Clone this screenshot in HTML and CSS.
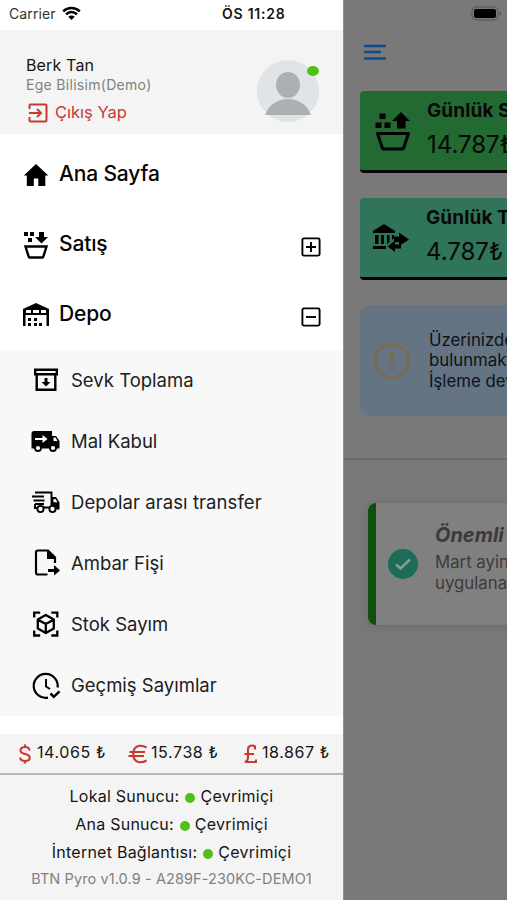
FILE: index.html
```html
<!DOCTYPE html>
<html lang="tr">
<head>
<meta charset="utf-8">
<title>BTN Pyro</title>
<link rel="stylesheet" href="styles.css">
</head>
<body>
<div class="app">
  <aside class="drawer">
    <div class="status">
      <span class="carrier">Carrier</span>
      <svg class="wifi" width="19" height="15" viewBox="0 0 19 15"><path d="M1.200 5.300a12 12 0 0 1 16.600 0M4 8.300a8 8 0 0 1 11 0" fill="none" stroke="#000" stroke-width="2.500"/><path d="M9.500 14 6.300 10.700a4.600 4.600 0 0 1 6.400 0z"/></svg>
      <span class="clock">ÖS 11:28</span>
    </div>
    <header class="profile">
      <div class="who">
        <div class="name">Berk Tan</div>
        <div class="company">Ege Bilisim(Demo)</div>
        <div class="logout">
          <svg width="20" height="20" viewBox="0 0 20 20" fill="none" stroke="#c63a30" stroke-width="2"><path d="M1.500 6V2.500a1 1 0 0 1 1-1h15a1 1 0 0 1 1 1v15a1 1 0 0 1-1 1h-15a1 1 0 0 1-1-1V14M1 10h11.500M9 6l4 4-4 4"/></svg>
          <span>Çıkış Yap</span>
        </div>
      </div>
      <div class="avatar">
        <svg width="62" height="62" viewBox="0 0 62 62"><circle cx="31" cy="31" r="31" fill="#e0e4e6"/><ellipse cx="31" cy="25" rx="12" ry="13" fill="#abb1b3"/><path d="M8 55c4-11 13-16 23-16s19 5 23 16z" fill="#abb1b3"/></svg>
        <i class="presence"></i>
      </div>
    </header>
    <nav class="menu">
      <div class="item home">
        <svg width="26" height="24" viewBox="0 0 26 24"><path d="M13 1 .8 12.500h3V23h7v-7.500h4.500V23h7V12.500h3z"/></svg>
        <span>Ana Sayfa</span>
      </div>
      <div class="item sales">
        <svg width="26" height="28" viewBox="0 0 26 28"><path d="M1 1h4v4H1zM7 1h4v4H7zM5 7h4v4H5zM16 1h5v5h4l-6.500 6.500L12 6h4z"/><path d="M2.500 15.500h21l-3.200 10.200a1 1 0 0 1-1 .8H6.700a1 1 0 0 1-1-.8z" fill="none" stroke="#000" stroke-width="2.400"/></svg>
        <span>Satış</span>
        <svg class="toggle" width="20" height="20" viewBox="0 0 20 20" fill="none" stroke="#000" stroke-width="1.900"><rect x="1.400" y="1.400" width="17.200" height="17.200" rx="1.500"/><path d="M5 10h10M10 5v10"/></svg>
      </div>
      <div class="item depot">
        <svg width="26" height="25" viewBox="0 0 26 25"><path fill-rule="evenodd" d="M0 24V7l13-6 13 6v17h-2.500V13h-21v11zM3 8v3h5V8zm7 0v3h6V8zm8 0v3h5V8z"/><path d="M5 16h3v3H5zM11 16h3v3h-3zM5 21h3v3H5zM11 21h3v3h-3zM16 21h3v3h-3z"/></svg>
        <span>Depo</span>
        <svg class="toggle" width="20" height="20" viewBox="0 0 20 20" fill="none" stroke="#000" stroke-width="1.900"><rect x="1.400" y="1.400" width="17.200" height="17.200" rx="1.500"/><path d="M5 10h10"/></svg>
      </div>
    </nav>
    <ul class="submenu">
      <li><svg width="30" height="28" viewBox="0 0 30 28"><g fill="none" stroke="#000" stroke-width="2.400"><path d="M4.200 3.700h21.600v4.600H4.200zM5.700 8.500v15.300h18.600V8.500"/></g><path d="M13.500 12h3v4h3L15 20.500 10.500 16h3z"/></svg><span>Sevk Toplama</span></li>
      <li><svg width="30" height="28" viewBox="0 0 30 28"><path d="M.5 6.500a2.500 2.500 0 0 1 2.500-2.500h18v5h4l3.500 5v7.500H.5z"/><path d="M4 12h8" stroke="#fff" stroke-width="2"/><path d="m11.500 8 5 4-5 4z" fill="#fff"/><path d="M22.500 10.500h2l2 3.500h-4z" fill="#fff"/><g fill="#fff" stroke="#000" stroke-width="1.800"><circle cx="7" cy="21" r="3"/><circle cx="22" cy="21" r="3"/></g></svg><span>Mal Kabul</span></li>
      <li><svg width="30" height="28" viewBox="0 0 30 28"><path d="M4 4.500h16.500v15H12M1 8.500h12M2.500 12.500h11M4 16h9M4 16v4h3" fill="none" stroke="#000" stroke-width="1.900"/><path d="M20 9h5l3.500 5.500v7h-3a4 4 0 0 0-5.500-3z"/><path d="M22.500 11h2l2 3.300h-4z" fill="#fff"/><g fill="#fff" stroke="#000" stroke-width="1.900"><circle cx="9.500" cy="21" r="3.100"/><circle cx="21.500" cy="21" r="3.100"/></g></svg><span class="transfer">Depolar arası transfer</span></li>
      <li><svg width="30" height="28" viewBox="0 0 30 28"><path d="M16.500 25.500H7a2 2 0 0 1-2-2V3.500a2 2 0 0 1 2-2h10l7 7V14" fill="none" stroke="#000" stroke-width="2.200"/><path d="M16 1l9 9h-9zM17 20h6v-4l6 5.500-6 5V23h-6z"/></svg><span>Ambar Fişi</span></li>
      <li><svg width="30" height="28" viewBox="0 0 30 28" fill="none" stroke="#000" stroke-width="2.300"><path d="M3.200 7.500V2.600h6M20.300 2.600h6v4.900M3.200 20.500v5h6M20.300 25.500h6v-5"/><path d="M14.800 5 22.800 9.500v9L14.800 23l-8-4.500v-9zM7 9.800l7.800 4.200 7.800-4.200M14.800 14v9" stroke-linejoin="round"/></svg><span>Stok Sayım</span></li>
      <li><svg width="30" height="28" viewBox="0 0 30 28" fill="none" stroke="#000" stroke-width="2.200"><path d="M17 25.700A12 12 0 1 1 26.600 15.500"/><path d="M15 7v7.500l4 2.500" stroke-width="1.900"/><path d="m19.500 21.500 3.300 3.300 5.700-5.500" stroke-width="2.500"/></svg><span>Geçmiş Sayımlar</span></li>
    </ul>
    <div class="rates">
      <div class="rate usd"><svg width="12" height="20" viewBox="0 0 12 20" fill="none" stroke="#c63a30" stroke-width="2.100"><path d="M10.500 6.500C10.500 4 8.500 3 6 3S1.500 4 1.500 6.500 3.500 9.500 6 10s4.700 1.200 4.700 3.700S8.500 17 6 17s-4.800-1-4.800-3.500M6 .5V3M6 17v2.500"/></svg><span>14.065 ₺</span></div>
      <div class="rate eur"><svg width="20" height="20" viewBox="0 0 20 20" fill="none" stroke="#c63a30" stroke-width="2.100"><path d="M18.500 3.500C13 .2 6.500 1.500 5.300 8v4c1.200 6.500 7.700 7.800 13.200 4.500M1.500 8H17M.5 12H16"/></svg><span>15.738 ₺</span></div>
      <div class="rate gbp"><svg width="14" height="20" viewBox="0 0 14 20" fill="none" stroke="#c63a30" stroke-width="2.100"><path d="M12 5.500V2.500C9 .7 5 1.500 5 5.500v8c0 2-1 3.500-3 4.500h11v-2.500M1.500 10H11"/></svg><span>18.867 ₺</span></div>
    </div>
    <footer class="servers">
      <div class="server"><span>Lokal Sunucu:</span><i></i><span>Çevrimiçi</span></div>
      <div class="server"><span>Ana Sunucu:</span><i></i><span>Çevrimiçi</span></div>
      <div class="server"><span>İnternet Bağlantısı:</span><i></i><span>Çevrimiçi</span></div>
      <div class="version"><span>BTN Pyro v1.0.9 - A289F-230KC-DEMO1</span></div>
    </footer>
  </aside>
  <main class="page">
    <svg class="battery" width="32" height="16" viewBox="0 0 32 16"><rect x="1" y="1" width="26" height="13" rx="4" fill="none" stroke="#555"/><rect x="3" y="3" width="22" height="9" rx="2"/><path d="M28.500 5.500c2 .5 2 3.500 0 4z" fill="#555"/></svg>
    <svg class="burger" width="22" height="17" viewBox="0 0 22 17"><path d="M1 2h20M1 8h15M1 14.500h20" stroke="#10488a" stroke-width="2.400" stroke-linecap="round"/></svg>
    <section class="card green">
      <svg width="36" height="40" viewBox="0 0 36 40"><path d="M4.500 2.500h6v5.500h-6zM.5 11.500h6V17h-6zM9.500 11.500h6V17h-6zM26 1l9 9h-4.500v7.500h-8.500V10H17z"/><path d="M2.500 22.500h31l-5 14.700a1 1 0 0 1-1 .8h-19a1 1 0 0 1-1-.8z" fill="none" stroke="#000" stroke-width="3" stroke-linejoin="round"/></svg>
      <div><b>Günlük S</b><span class="amount">14.787₺</span></div>
    </section>
    <section class="card teal">
      <svg width="38" height="30" viewBox="0 0 38 30"><path d="M1 8 12 1l11 7v2H1zM3 12h3.500v9H3zM9 12h3v9H9zM15 12h2.500v7L15 21zM20 12h2v3l-2 2zM1 23h13v3H1zM22 13.500h5V9.500l10 7-10 6.500v-4h-5zM29 21.500v4h-6V29l-7.500-5.500L23 17.500v4z"/></svg>
      <div><b>Günlük T</b><span class="amount">4.787₺</span></div>
    </section>
    <section class="notice">
      <svg width="38" height="38" viewBox="0 0 38 38" fill="none" stroke="#7b6c45" stroke-width="2.600"><circle cx="19" cy="19" r="16.700"/><path d="M19 10v11M19 24.500v3.500" stroke-width="3.200"/></svg>
      <p>Üzerinizde<br>bulunmakt<br>İşleme dev</p>
    </section>
    <hr>
    <section class="news">
      <svg width="30" height="30" viewBox="0 0 30 30"><circle cx="15" cy="15" r="15" fill="#1c6c58"/><path d="m8 15.500 4.500 4 9.500-9" fill="none" stroke="#8b9a96" stroke-width="2.500"/></svg>
      <div><h2>Önemli</h2><p>Mart ayin<br>uygulana</p></div>
    </section>
  </main>
</div>
</body>
</html>
```
FILE: styles.css
```css
* { box-sizing: border-box; }
body { margin: 0; font-family: Inter, "Liberation Sans", sans-serif; color: #151515; }
span, b, h2, p, .name, .company { white-space: nowrap; }
svg { display: block; flex: none; }
.app { display: flex; width: 507px; height: 900px; overflow: hidden; }
.drawer { width: 343px; flex: none; display: flex; flex-direction: column; background: #fff; }
.status { height: 30px; display: flex; align-items: center; padding: 0 0 3px 9px; }
.carrier { width: 47px; font-size: 14px; letter-spacing: .1px; color: #333; }
.wifi { margin: 0 0 1px 6px; }
.clock { margin-left: 141px; font-size: 14px; font-weight: 600; letter-spacing: .75px; }
.profile { height: 104px; background: #f4f4f4; display: flex; justify-content: space-between; padding: 24px 24px 0 26px; }
.name { font-size: 16px; line-height: 22px; letter-spacing: .15px; }
.company { font-size: 14px; line-height: 18px; letter-spacing: .3px; color: #818181; }
.logout { display: flex; align-items: center; gap: 7px; margin: 9px 0 0 2px; font-size: 16.500px; line-height: 20px; color: #c63a30; }
.logout span { margin-top: -3px; }
.avatar { position: relative; width: 62px; height: 62px; margin-top: 6px; }
.presence { position: absolute; right: 0; top: 6px; width: 12px; height: 10px; border-radius: 50%; background: #50c018; }
.menu { height: 216px; padding-top: 5px; }
.item { height: 69.700px; display: flex; align-items: center; padding: 0 22px 0 23px; gap: 10px; font-size: 21px; font-weight: 500; letter-spacing: -.15px; color: #050505; }
.item > svg { margin-top: 2px; }
.item .toggle { margin: 7px 0 0 auto; }
.submenu { list-style: none; margin: 0; padding: 0; height: 366px; background: #f8f8f8; font-size: 18.500px; color: #202020; }
.submenu li { height: 61.100px; display: flex; align-items: center; padding: 0 0 2px 31px; gap: 10px; }
.submenu svg { margin-top: 1px; }
.transfer { letter-spacing: .08px; }
.rates { height: 41px; margin-top: 18px; background: #f4f4f4; border-bottom: 2px solid #b6b6b6; display: flex; padding-left: 19px; font-size: 16px; letter-spacing: .6px; }
.rate { display: flex; align-items: center; height: 36px; }
.rate svg { margin-top: 4px; }
.usd { width: 109px; gap: 6px; }
.eur { width: 115px; gap: 3px; }
.gbp { gap: 5px; }
.servers { flex: 1; background: #f4f4f4; padding-top: 8px; font-size: 16px; letter-spacing: .25px; }
.server { height: 28px; display: flex; align-items: center; justify-content: center; padding-bottom: 2px; }
.server i { width: 10px; height: 10px; border-radius: 50%; background: #50c018; margin: 3px 5px 0 6px; }
.version { text-align: center; line-height: 24px; font-size: 14.500px; letter-spacing: .1px; color: #818181; }
.page { flex: 1; min-width: 0; overflow: hidden; background: #797979; border-left: 1px solid #929292; color: #080808; display: flex; flex-direction: column; }
.page > * { flex: none; }
.battery { margin: 6px 0 0 127px; }
.burger { margin: 22px 0 0 20px; }
.card { width: 240px; height: 82px; margin: 30px 0 0 16px; border-radius: 4px; border-bottom: 3px solid #050505; display: flex; padding-left: 15px; }
.card svg { margin-top: 20px; }
.card b { display: block; margin-top: 8px; font-size: 19px; line-height: 24px; letter-spacing: .1px; }
.card > div { margin-left: 16px; }
.amount { display: block; font-size: 24px; line-height: 44px; }
.green { background: #236a32; }
.teal { background: #30755a; margin-top: 25px; padding-left: 12px; }
.teal svg { margin-top: 25px; }
.notice { width: 240px; height: 111px; margin: 25px 0 0 16px; border-radius: 10px; background: #657482; display: flex; align-items: center; padding-left: 13px; gap: 18px; color: #0c1219; }
.notice p { margin: 0; font-size: 16.800px; line-height: 20.500px; }
hr { width: 100%; height: 2px; margin: 42px 0 0; border: 0; background: #6b6b6b; }
.news { width: 240px; height: 122px; margin: 43px 0 0 24px; background: #808080; border-left: 8px solid #10500f; border-radius: 8px; display: flex; padding-left: 12px; box-shadow: 0 2px 8px #6b6b6b; }
.news svg { margin-top: 46px; }
.news > div { margin-left: 17px; color: #3b3b3b; }
.news h2 { margin: 20px 0 5px; font-size: 20px; line-height: 24px; font-style: italic; }
.news p { margin: 0; font-size: 16.800px; line-height: 21px; }
```
